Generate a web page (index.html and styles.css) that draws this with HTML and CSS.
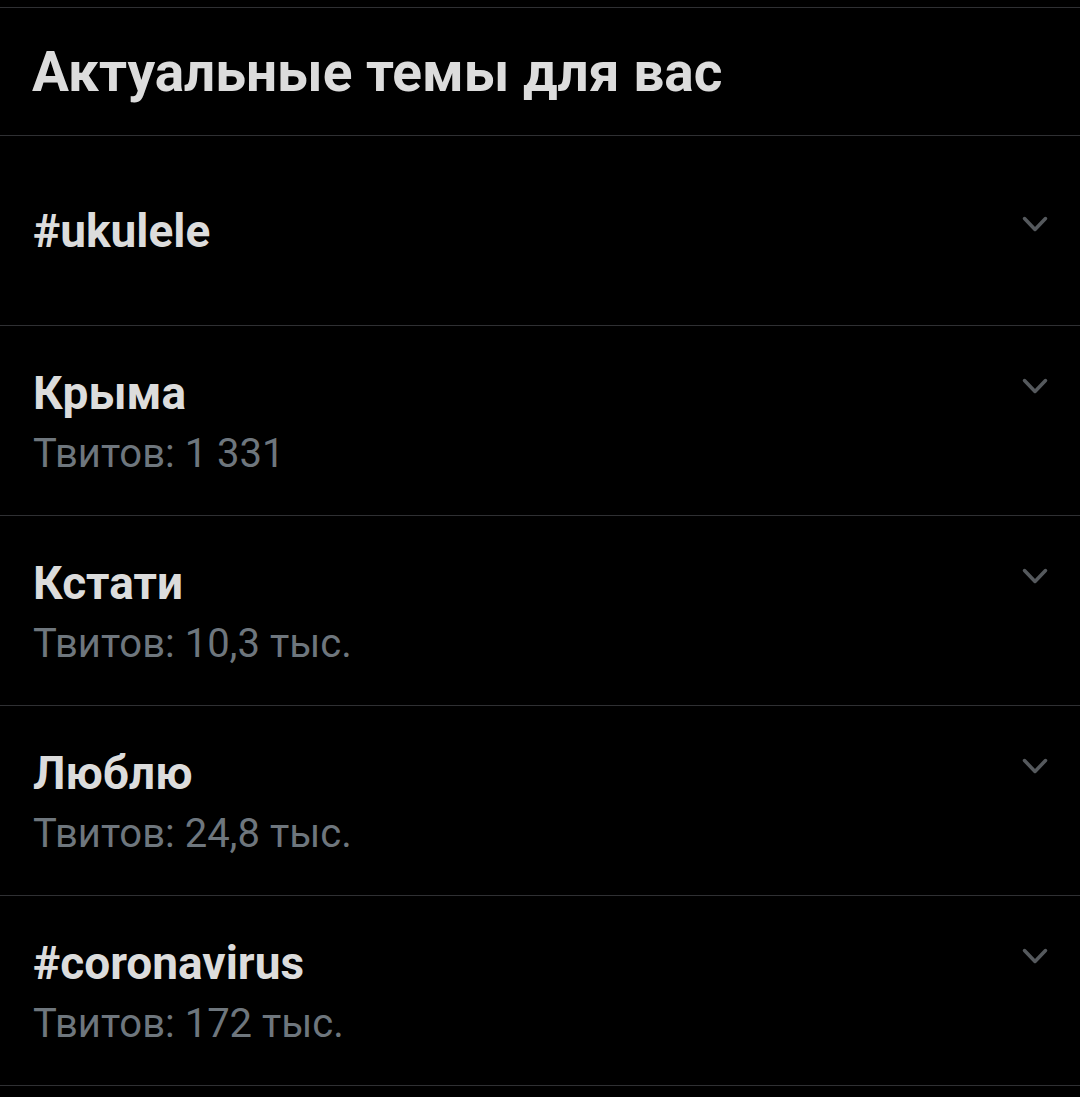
FILE: index.html
```html
<!DOCTYPE html>
<html lang="ru">
<head>
<meta charset="utf-8">
<link rel="stylesheet" href="styles.css">
</head>
<body>
<div class="page">
  <header class="head"><h1 class="head-title">Актуальные темы для вас</h1></header>
  <ul class="list">
    <li class="row">
      <div class="info">
        <div class="line"><span class="name">#ukulele</span><svg class="chev" viewBox="0 0 26 17"><path d="M2.5 2.5 L13 13.5 L23.5 2.5"/></svg></div>
      </div>
    </li>
    <li class="row">
      <div class="info">
        <div class="line"><span class="name">Крыма</span><svg class="chev" viewBox="0 0 26 17"><path d="M2.5 2.5 L13 13.5 L23.5 2.5"/></svg></div>
        <div class="count">Твитов: 1 331</div>
      </div>
    </li>
    <li class="row">
      <div class="info">
        <div class="line"><span class="name">Кстати</span><svg class="chev" viewBox="0 0 26 17"><path d="M2.5 2.5 L13 13.5 L23.5 2.5"/></svg></div>
        <div class="count">Твитов: 10,3 тыс.</div>
      </div>
    </li>
    <li class="row">
      <div class="info">
        <div class="line"><span class="name">Люблю</span><svg class="chev" viewBox="0 0 26 17"><path d="M2.5 2.5 L13 13.5 L23.5 2.5"/></svg></div>
        <div class="count">Твитов: 24,8 тыс.</div>
      </div>
    </li>
    <li class="row">
      <div class="info">
        <div class="line"><span class="name">#coronavirus</span><svg class="chev" viewBox="0 0 26 17"><path d="M2.5 2.5 L13 13.5 L23.5 2.5"/></svg></div>
        <div class="count">Твитов: 172 тыс.</div>
      </div>
    </li>
  </ul>
</div>
</body>
</html>
```
FILE: styles.css
```css
html, body {
  margin: 0;
  padding: 0;
  background: #000;
}
body {
  font-family: Roboto, "Noto Sans", sans-serif;
  color: #d9d9d9;
}
.page {
  padding-top: 7px;
}
.head {
  border-top: 1px solid #2f3033;
  border-bottom: 1px solid #2f3033;
  box-sizing: border-box;
  height: 129px;
  display: flex;
  align-items: center;
  padding-left: 32px;
}
.head-title {
  margin: 0;
  font-size: 55px;
  line-height: 64px;
  font-weight: 700;
  color: #dcdcdc;
}
.list {
  list-style: none;
  margin: 0;
  padding: 0;
}
.row {
  height: 190px;
  box-sizing: border-box;
  border-bottom: 1px solid #2f3033;
  display: flex;
  align-items: center;
  padding: 0 32px 0 33px;
}
.info {
  flex: 1;
  display: flex;
  flex-direction: column;
}
.line {
  display: flex;
  justify-content: space-between;
  align-items: flex-start;
}
.name {
  font-size: 46px;
  font-weight: 700;
  line-height: 66px;
  color: #dcdcdc;
}
.count {
  font-size: 40px;
  font-weight: 400;
  line-height: 56px;
  color: #6e767d;
}
.chev {
  width: 26px;
  height: 17px;
  margin-top: 18px;
  fill: none;
  stroke: #55595d;
  stroke-width: 3.5;
  stroke-linecap: round;
  stroke-linejoin: round;
}
```
